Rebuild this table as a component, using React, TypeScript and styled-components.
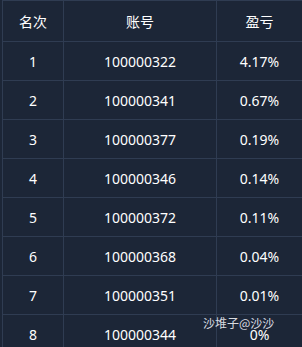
import React from 'react';
import styled, { createGlobalStyle } from 'styled-components';

interface Rank {
  rank: number;
  account: string;
  profit: string;
}

const ranks: Array<Rank> = [
  { rank: 1, account: '100000322', profit: '4.17%' },
  { rank: 2, account: '100000341', profit: '0.67%' },
  { rank: 3, account: '100000377', profit: '0.19%' },
  { rank: 4, account: '100000346', profit: '0.14%' },
  { rank: 5, account: '100000372', profit: '0.11%' },
  { rank: 6, account: '100000368', profit: '0.04%' },
  { rank: 7, account: '100000351', profit: '0.01%' },
  { rank: 8, account: '100000344', profit: '0%' },
];

function App() {
  return (
    <>
      <GlobalStyle />
      <Page>
        <Table>
          <thead>
            <tr>
              <Head>名次</Head>
              <Head>账号</Head>
              <Head>盈亏</Head>
            </tr>
          </thead>
          <tbody>
            {ranks.map((r) => (
              <tr key={r.rank}>
                <Cell>{r.rank}</Cell>
                <Cell>{r.account}</Cell>
                <Cell>{r.profit}</Cell>
              </tr>
            ))}
          </tbody>
        </Table>
        <Watermark>沙堆子@沙沙</Watermark>
      </Page>
    </>
  );
}

const GlobalStyle = createGlobalStyle`
  html, body {
    margin: 0;
    background: #1c2637;
    overflow: hidden;
  }
`;

const Page = styled.div`
  position: relative;
  width: 302px;
  height: 347px;
  overflow: hidden;
  background: #1c2637;
  padding-left: 2px;
  box-sizing: border-box;
  font-family: "Noto Sans", "Noto Sans CJK SC", sans-serif;
`;

const Table = styled.table`
  width: 301px;
  border-collapse: collapse;
  table-layout: fixed;
  color: #ffffff;
  font-size: 14px;

  col:first-child {
    width: 60px;
  }
`;

const Head = styled.th`
  height: 40px;
  padding: 0;
  border: 1px solid #2f3c52;
  font-weight: normal;
  text-align: center;
  &:nth-child(1) { width: 60px; }
  &:nth-child(2) { width: 152px; }
`;

const Cell = styled.td`
  height: 38px;
  padding: 0;
  border: 1px solid #2f3c52;
  text-align: center;
`;

const Watermark = styled.div`
  position: absolute;
  left: 203px;
  top: 314px;
  font-size: 12px;
  color: #d8dbe0;
  font-family: "Noto Sans CJK SC", sans-serif;
`;

export default App;
